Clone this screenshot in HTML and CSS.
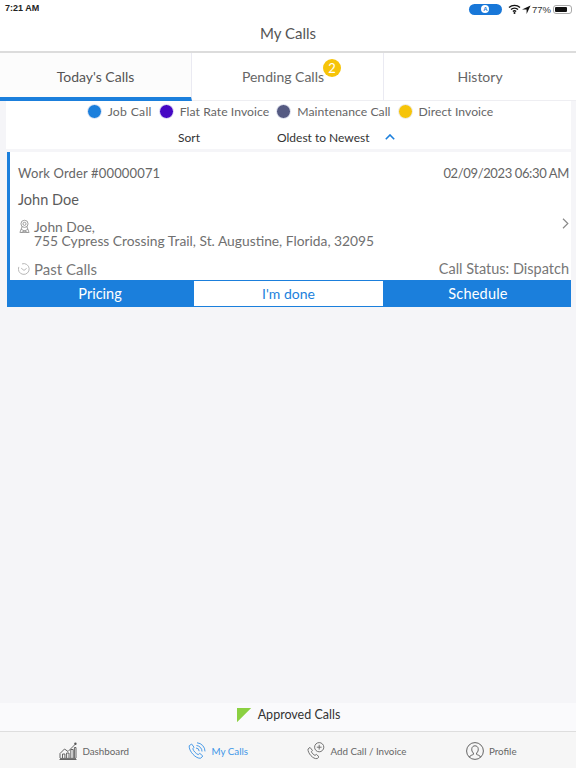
FILE: index.html
```html
<!DOCTYPE html>
<html lang="en">
<head>
    <meta charset="UTF-8">
    <meta name="viewport" content="width=device-width, initial-scale=1.0">
    <title>My Calls</title>
    <link rel="stylesheet" href="styles.css">
</head>
<body>
    <div class="status-bar">
        <span class="time">7:21 AM</span>
        <div class="status-icons">
            <span class="pill"><span class="pill-dot">A</span></span>
            <svg class="wifi" width="13" height="10" viewBox="0 0 13 10"><path d="M1 3.6a8 8 0 0 1 11 0M3 5.6a5.2 5.2 0 0 1 7 0M4.9 7.4a2.4 2.4 0 0 1 3.2 0" fill="none" stroke="#111" stroke-width="1.4"/><circle cx="6.5" cy="8.9" r="1" fill="#111"/></svg>
            <svg class="arrow" width="9" height="9" viewBox="0 0 9 9"><path d="M8.6.4 0 4.4h4.6V9z" fill="#111"/></svg>
            <span class="battery-text">77%</span>
            <span class="battery"><span class="battery-fill"></span></span>
        </div>
    </div>

    <header class="title-bar">My Calls</header>

    <nav class="tabs">
        <div class="tab active">Today's Calls</div>
        <div class="tab tab-pending">Pending Calls<span class="badge">2</span></div>
        <div class="tab">History</div>
    </nav>

    <main class="content">
        <div class="filters">
            <div class="legend">
                <span class="legend-item legend-job"><i class="dot dot-job"></i>Job Call</span>
                <span class="legend-item"><i class="dot dot-flat"></i>Flat Rate Invoice</span>
                <span class="legend-item"><i class="dot dot-maint"></i>Maintenance Call</span>
                <span class="legend-item"><i class="dot dot-direct"></i>Direct Invoice</span>
            </div>
            <div class="sort-row">
                <span class="sort-label">Sort</span>
                <span class="sort-value">Oldest to Newest</span>
                <svg width="10" height="6" viewBox="0 0 10 6"><path d="M.8 5.2 5 1l4.2 4.2" fill="none" stroke="#1b7fdc" stroke-width="1.6"/></svg>
            </div>
        </div>

        <section class="card">
            <div class="card-body">
                <div class="row order-row">
                    <span class="order-no">Work Order #00000071</span>
                    <span class="order-date">02/09/2023 06:30 AM</span>
                </div>
                <div class="customer">John Doe</div>
                <div class="address">
                    <svg class="pin" width="11" height="15" viewBox="0 0 12 15"><g fill="none" stroke="#8a8a8a" stroke-width=".9"><circle cx="6" cy="4.6" r="3.9"/><circle cx="6" cy="4.6" r="1.7"/><path d="M3.4 7.6 1 14h10L8.6 7.6M2.4 10.6l7 3.4M9.6 10.6l-7 3.4"/></g></svg>
                    <div class="address-text">John Doe,<br>755 Cypress Crossing Trail, St. Augustine, Florida, 32095</div>
                    <svg class="chevron" width="7" height="11" viewBox="0 0 7 11"><path d="M1 .8 5.800 5.500 1 10.200" fill="none" stroke="#8a8a8a" stroke-width="1.2"/></svg>
                </div>
                <div class="row status-row">
                    <span class="past"><svg width="12" height="12" viewBox="0 0 12 12"><path d="M4 .9a5.400 5.400 0 1 1-3.200 3M3.200 5.200 6 7.400l2.600-2" fill="none" stroke="#b0b0b0" stroke-width=".9"/></svg>Past Calls</span>
                    <span class="call-status">Call Status: Dispatch</span>
                </div>
            </div>
            <div class="actions">
                <div class="action action-first">Pricing</div>
                <div class="action action-outline">I'm done</div>
                <div class="action action-last">Schedule</div>
            </div>
        </section>
    </main>

    <div class="approved"><i class="flag"></i>Approved Calls</div>

    <footer class="bottom-nav">
        <div class="nav-item">
            <svg width="18" height="18" viewBox="0 0 18 18"><g fill="none" stroke="#555" stroke-width=".9"><path d="M.5 17.5h17M1 16.4h16M1 16V11.5L5.5 7l3.5 2.5L16 2.5"/><path d="M3.5 16v-4h2.4v4M7.6 16v-5h2.4v5M11.8 16V7.5h2.4V16M15.4 16V5.500h1.600V16"/></g><circle cx="16.400" cy="1.800" r="1.200" fill="#555"/></svg>
            Dashboard
        </div>
        <div class="nav-item current">
            <svg width="18" height="18" viewBox="0 0 18 18"><g fill="none" stroke="#4a9be8" stroke-width="1"><path d="M1.200 3.800 3.600 2 6 5.200 4.800 6.800c.6 2 3.200 5 5.400 5.800l1.600-1.200 3 2.600-2 2.200C8 17.200.6 9 1.200 3.800z"/><path d="M8.500 3.500a6 6 0 0 1 5.500 6M9 .8a8.600 8.600 0 0 1 8 8.600M8 6a3.400 3.400 0 0 1 3.200 3.200"/></g></svg>
            My Calls
        </div>
        <div class="nav-item">
            <svg width="18" height="18" viewBox="0 0 18 18"><g fill="none" stroke="#666" stroke-width=".9"><path d="M1 7 3 5.400l2.400 3-1 1.400c.6 1.400 2.200 3 3.600 3.600l1.400-1 2.600 2.400-1.800 1.800C6 17.400.6 11 1 7z"/><circle cx="12.200" cy="5.200" r="4.600"/><path d="M12.200 2.800v4.800M9.800 5.200h4.800"/></g></svg>
            Add Call / Invoice
        </div>
        <div class="nav-item">
            <svg width="18" height="18" viewBox="0 0 18 18"><g fill="none" stroke="#555" stroke-width=".9"><circle cx="9" cy="9" r="8.400"/><path d="M3.400 15.200c.6-2 2.800-2 4-2.800V11C6 9.800 5.600 8.400 5.800 6.600 6 4.800 7.400 3.800 9 3.800s3 1 3.200 2.800c.2 1.800-.2 3.200-1.600 4.400v1.400c1.200.8 3.400.8 4 2.800"/></g></svg>
            Profile
        </div>
    </footer>
</body>
</html>
```

FILE: styles.css
```css
* { box-sizing: border-box; }
html, body { height: 100%; }
body { margin: 0; height: 768px; overflow: hidden; display: flex; flex-direction: column; background-color: #f5f5f8; font-family: Lato, "Open Sans", sans-serif; color: #5f5f5f; }

.status-bar { height: 17px; padding: 0 4px 2px 5px; display: flex; justify-content: space-between; align-items: center; background-color: #fff; font-family: "Liberation Sans", sans-serif; font-size: 9px; color: #222; }
.time { font-weight: bold; }
.status-icons { display: flex; align-items: center; margin-top: 3px; }
.pill { width: 33px; height: 11px; border-radius: 6px; background-color: #1877d8; display: flex; align-items: center; justify-content: center; margin-right: 6px; }
.pill-dot { width: 8px; height: 8px; border-radius: 50%; background-color: #fff; color: #1877d8; font-size: 6px; font-weight: bold; line-height: 8px; text-align: center; }
.wifi { margin-right: 1px; }
.arrow { margin-right: 1px; }
.battery-text { font-size: 9.500px; color: #333; margin-right: 2px; }
.battery { width: 19px; height: 9px; border: 1px solid #aaa; border-radius: 3px; padding: 1px; }
.battery-fill { display: block; width: 78%; height: 100%; background-color: #111; border-radius: 1px; }

.title-bar { height: 36px; background-color: #fff; border-bottom: 2px solid #dcdcdc; text-align: center; font-size: 15px; line-height: 33px; color: #555; }

.tabs { display: flex; height: 48px; background-color: #fff; }
.tab { position: relative; flex: none; width: 192px; text-align: center; font-size: 14px; line-height: 47px; color: #666; border-right: 1px solid #eaeaf2; border-bottom: 1px solid #eeeef2; }
.tab:last-child { border-right: none; }
.tab.active { border-bottom: 4px solid #1b7fdc; color: #555; background-color: #fcfcfc; }
.tab-pending { padding-right: 9px; }
.badge { position: absolute; top: 6px; left: 131px; width: 18px; height: 18px; border-radius: 50%; background-color: #f6c409; color: #fff; font-size: 13px; line-height: 18px; text-align: center; }

.content { flex: 1; padding: 0 5px 0 6px; }
.filters { height: 48px; background-color: #fff; }
.legend { display: flex; justify-content: center; height: 20px; align-items: center; font-size: 12.200px; letter-spacing: .05px; color: #666; padding-left: 3px; }
.legend-item { display: flex; align-items: center; margin-right: 7px; }
.legend-item:last-child { margin-right: 0; }
.legend-job { letter-spacing: .3px; margin-right: 7px; }
.dot { width: 15px; height: 15px; border: 1.500px solid #eef0fa; border-radius: 50%; margin-right: 6px; }
.dot-job { background-color: #1b7fdc; }
.dot-flat { background-color: #4608c4; }
.dot-maint { background-color: #555a82; }
.dot-direct { background-color: #f6c409; }
.sort-row { display: flex; align-items: center; height: 28px; padding: 4px 0 0 172px; font-size: 12px; color: #333; }
.sort-label { width: 99px; }
.sort-value { margin-right: 15px; }

.card { margin: 3px 0 0 1px; background-color: #fff; }
.card-body { height: 128px; border-left: 3px solid #1b7fdc; padding: 12px 2px 0 8px; font-size: 13px; color: #666; }
.row { display: flex; justify-content: space-between; }
.order-row { line-height: 18px; }
.order-no { letter-spacing: .15px; }
.order-date { letter-spacing: -.37px; }
.customer { margin-top: 9px; font-size: 14.500px; line-height: 18px; color: #5c5c5c; }
.address { position: relative; display: flex; margin-top: 11px; font-size: 13.800px; line-height: 14px; color: #707070; }
.pin { flex: none; margin: -1px 4px 0 1px; }
.chevron { position: absolute; right: 0; top: -2px; }
.status-row { align-items: flex-end; margin-top: 13px; font-size: 15px; line-height: 16px; color: #777; }
.past { display: flex; align-items: center; }
.past svg { margin: 0 4px 0 0; }
.call-status { font-size: 14.500px; }
.actions { display: flex; height: 27px; background-color: #1b7fdc; border: 1px solid #1b7fdc; color: #fff; font-size: 14.500px; }
.action { flex: 1; text-align: center; line-height: 25px; }
.action-first { flex: none; width: 186px; padding-right: 2px; }
.action-outline { flex: none; width: 189px; background-color: #fff; color: #1b7fdc; font-size: 14px; }
.action-last { padding-left: 3px; letter-spacing: .2px; }

.approved { height: 28px; padding-bottom: 6px; background-color: #fafafc; display: flex; align-items: center; justify-content: center; font-size: 12.500px; color: #333; }
.flag { width: 15px; height: 15px; margin: 2px 6px 0 1px; background-color: #8bd042; clip-path: polygon(0 0, 100% 0, 0 100%); }

.bottom-nav { height: 37px; padding-top: 1px; display: flex; justify-content: space-evenly; align-items: center; background-color: #f6f6f6; border-top: 1px solid #dedede; font-size: 9.800px; color: #666; }
.nav-item { display: flex; align-items: center; gap: 5px; white-space: nowrap; }
.nav-item.current { color: #3f97e8; }
```
